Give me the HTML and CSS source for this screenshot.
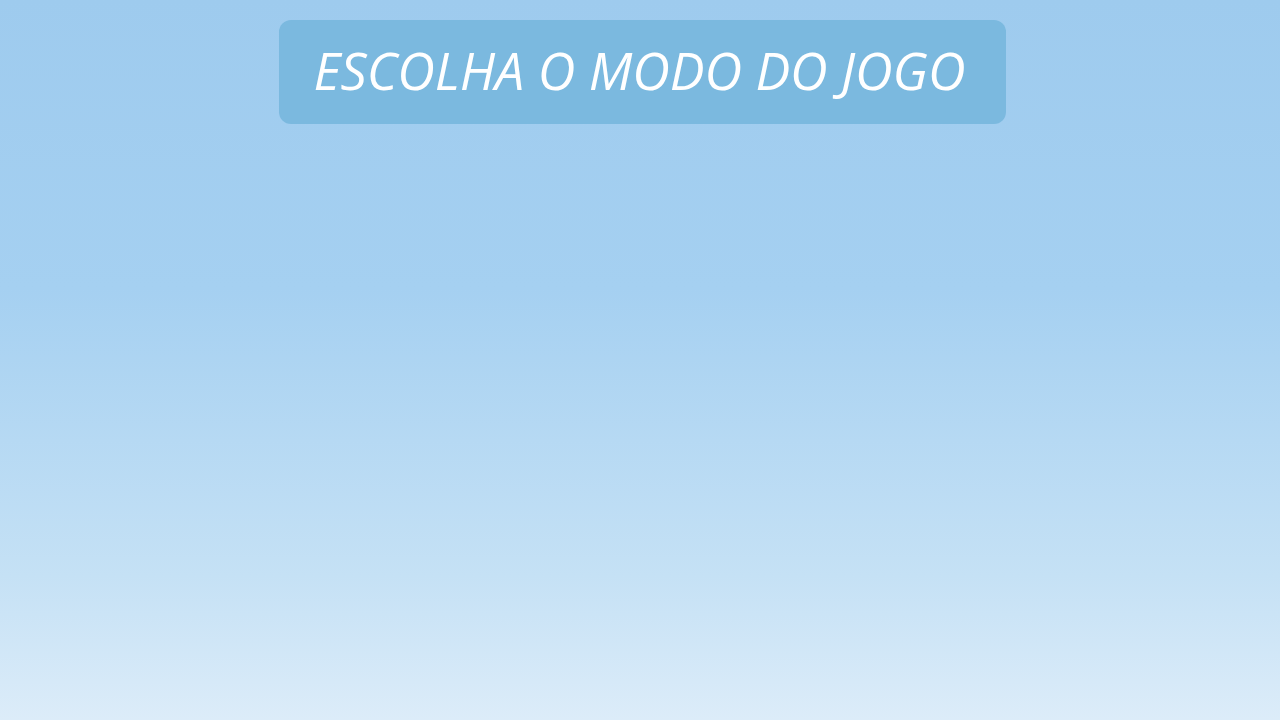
FILE: index.html
```html
<!DOCTYPE html>
<html lang="pt">
<head>
<meta charset="utf-8">
<title>Escolha o modo do jogo</title>
<link rel="stylesheet" href="styles.css">
</head>
<body>
<main class="screen">
  <h1 class="title">ESCOLHA O MODO DO JOGO</h1>
</main>
</body>
</html>
```
FILE: styles.css
```css
html, body {
  margin: 0;
  padding: 0;
  height: 100%;
}
body {
  background: linear-gradient(to bottom, #9ecbee 0%, #a5d0f1 40%, #c5e1f5 80%, #dcecf9 100%);
  font-family: "Open Sans", "Noto Sans", sans-serif;
}
.screen {
  min-height: 100vh;
  display: flex;
  flex-direction: column;
  align-items: center;
  padding-top: 20px;
  box-sizing: border-box;
}
.title {
  margin: 0 0 0 5px;
  box-sizing: border-box;
  height: 104px;
  width: 727px;
  padding: 0 6px 6px 0;
  display: flex;
  align-items: center;
  justify-content: center;
  background: #7bb9df;
  border-radius: 12px;
  color: #ffffff;
  font-style: italic;
  font-weight: 400;
  font-size: 52px;
  letter-spacing: 0;
}
```
